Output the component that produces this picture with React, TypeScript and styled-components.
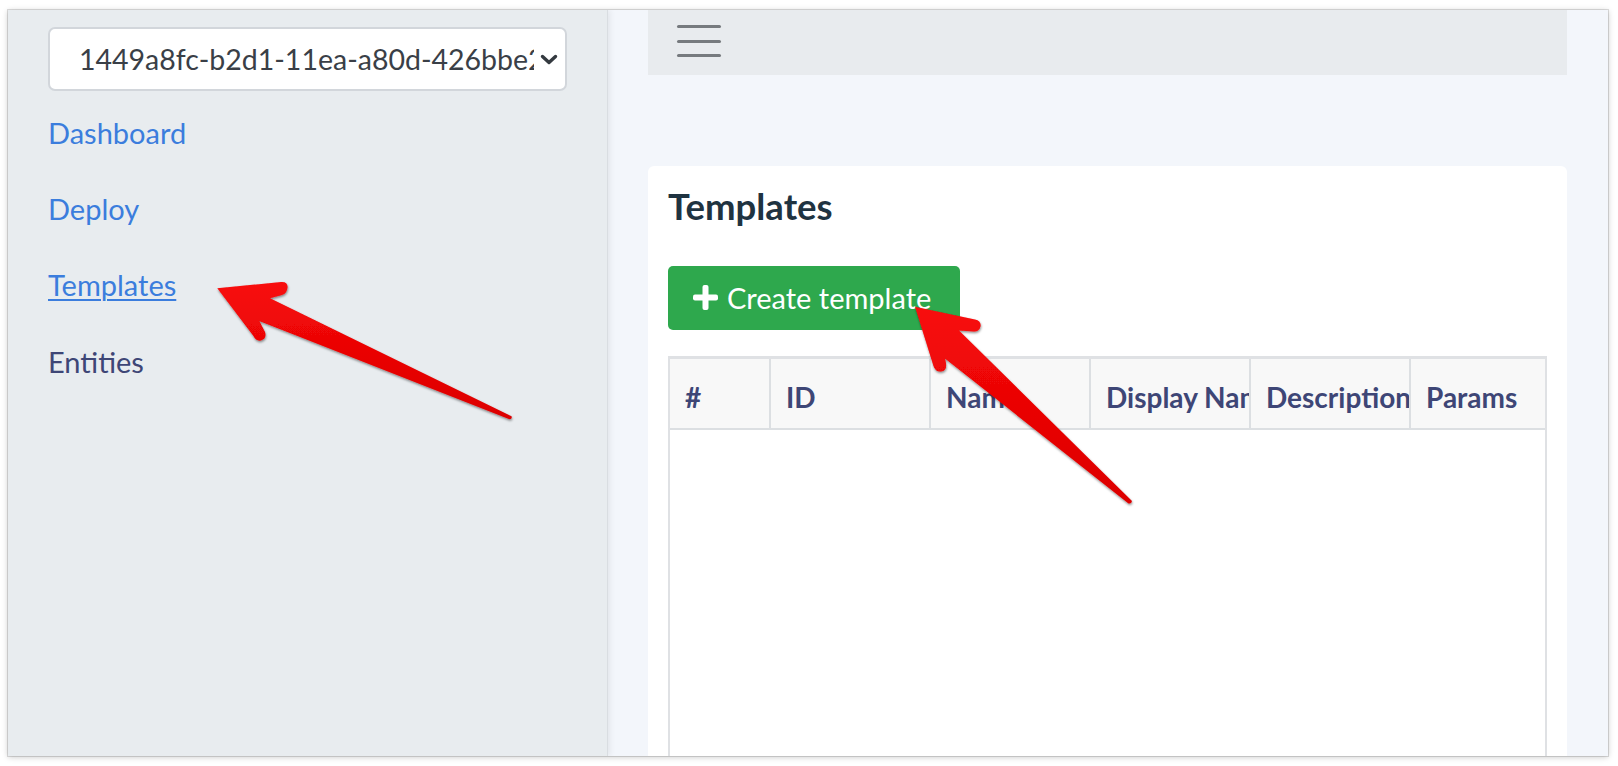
import React from "react";
import styled, { createGlobalStyle } from "styled-components";

const GlobalStyle = createGlobalStyle`
  html, body { margin: 0; padding: 0; background: #ffffff; }
  body { font-family: Lato, "Liberation Sans", sans-serif; }
  * { box-sizing: border-box; }
`;

const Page = styled.div`
  position: relative;
  width: 1618px;
  height: 766px;
  padding: 10px 10px 0 8px;
  overflow: hidden;
  background: #ffffff;
`;

const Frame = styled.div`
  display: flex;
  width: 1600px;
  height: 746px;
  overflow: hidden;
  box-shadow: 0 0 0 1px rgba(0, 0, 0, 0.13), 0 1px 6px rgba(0, 0, 0, 0.22);
`;

const Sidebar = styled.aside`
  position: relative;
  z-index: 1;
  flex: 0 0 600px;
  background: #e8ecef;
  padding: 17px 40px 0 40px;
  border-right: 1px solid #d9dde1;
  box-shadow: 2px 0 6px rgba(0, 0, 0, 0.07);
`;

const SelectBox = styled.div`
  display: flex;
  align-items: center;
  gap: 6px;
  width: 519px;
  height: 64px;
  padding: 0 7px 0 29px;
  background: #ffffff;
  border: 2px solid #d2d6db;
  border-radius: 7px;
`;

const SelectValue = styled.span`
  flex: 1;
  overflow: hidden;
  white-space: nowrap;
  font-size: 28.5px;
  color: #3a3f47;
`;

const Nav = styled.nav`
  display: flex;
  flex-direction: column;
  gap: 34.3px;
  margin-top: 20.8px;
`;

type Tone = "link" | "hover" | "plain";

const NavLink = styled.a<{ $tone: Tone }>`
  display: block;
  width: fit-content;
  font-size: 29px;
  line-height: 42px;
  color: ${(p) => (p.$tone === "plain" ? "#3e4676" : "#3b7ddd")};
  text-decoration: ${(p) => (p.$tone === "hover" ? "underline" : "none")};
  text-decoration-thickness: 2px;
  text-underline-offset: 3px;
  cursor: pointer;
`;

const Main = styled.main`
  flex: 1;
  min-width: 0;
  background: #f3f6fb;
  padding: 0 41px 0 40px;
  overflow: hidden;
`;

const TopBar = styled.header`
  display: flex;
  align-items: center;
  height: 65px;
  padding: 0 0 3px 29px;
  background: #e8ebee;
`;

const Hamburger = styled.div`
  display: flex;
  flex-direction: column;
  gap: 11.5px;
`;

const Bar = styled.span`
  display: block;
  width: 44px;
  height: 3px;
  border-radius: 2px;
  background: #767a7e;
`;

const Card = styled.section`
  margin-top: 91px;
  padding: 19px 20px 40px;
  background: #ffffff;
  border-radius: 6px;
`;

const Title = styled.h2`
  margin: 0;
  font-family: Lato, "Liberation Sans", sans-serif;
  font-weight: 700;
  font-size: 36.5px;
  line-height: 43px;
  color: #1f3341;
`;

const CreateButton = styled.button`
  display: flex;
  align-items: center;
  gap: 9px;
  margin-top: 37.5px;
  width: 292px;
  height: 64px;
  padding: 0 0 0 25px;
  border: none;
  border-radius: 5px;
  background: #2ea84d;
  color: #ffffff;
  font-family: Lato, "Liberation Sans", sans-serif;
  font-size: 29px;
  cursor: pointer;
`;

const Table = styled.div`
  margin-top: 26px;
  border: 2px solid #dfe1e4;
  border-top-width: 3px;
  border-bottom: none;
`;

const HeadRow = styled.div`
  display: grid;
  grid-template-columns: 101px 160px 160px 160px 160px 1fr;
  height: 71px;
  background: #f8f8f8;
  border-bottom: 2px solid #dcdfe2;
`;

const HeadCell = styled.div<{ $last?: boolean }>`
  display: flex;
  align-items: center;
  padding: 8px 0 0 15px;
  overflow: hidden;
  white-space: nowrap;
  border-right: ${(p) => (p.$last ? "none" : "2px solid #dcdfe2")};
  font-weight: 700;
  font-size: 28px;
  color: #3e4676;
`;

const TableBody = styled.div`
  height: 420px;
  background: #ffffff;
`;

const Overlay = styled.svg`
  position: absolute;
  top: 0;
  left: 0;
  width: 1618px;
  height: 766px;
  pointer-events: none;
  z-index: 10;
`;

const Chevron = () => (
  <svg width="18" height="11" viewBox="0 0 18 11">
    <path d="M2.5 2.5 L9 8.5 L15.5 2.5" fill="none" stroke="#343a40" strokeWidth="3.4" strokeLinecap="round" strokeLinejoin="round" />
  </svg>
);

const Plus = () => (
  <svg width="25" height="25" viewBox="0 0 25 25">
    <rect x="9.5" y="0" width="6" height="25" rx="2" fill="#ffffff" />
    <rect x="0" y="9.5" width="25" height="6" rx="2" fill="#ffffff" />
  </svg>
);

const columns = ["#", "ID", "Name", "Display Name", "Description", "Params"];

export default function App() {
  return (
    <>
      <GlobalStyle />
      <Page>
        <Frame>
          <Sidebar>
            <SelectBox>
              <SelectValue>1449a8fc-b2d1-11ea-a80d-426bbe2a1b3c</SelectValue>
              <Chevron />
            </SelectBox>
            <Nav>
              <NavLink $tone="link">Dashboard</NavLink>
              <NavLink $tone="link">Deploy</NavLink>
              <NavLink $tone="hover">Templates</NavLink>
              <NavLink $tone="plain">Entities</NavLink>
            </Nav>
          </Sidebar>
          <Main>
            <TopBar>
              <Hamburger>
                <Bar />
                <Bar />
                <Bar />
              </Hamburger>
            </TopBar>
            <Card>
              <Title>Templates</Title>
              <CreateButton>
                <Plus />
                Create template
              </CreateButton>
              <Table>
                <HeadRow>
                  {columns.map((c, i) => (
                    <HeadCell key={c} $last={i === columns.length - 1}>
                      {c}
                    </HeadCell>
                  ))}
                </HeadRow>
                <TableBody />
              </Table>
            </Card>
          </Main>
        </Frame>
        <Overlay viewBox="0 0 1618 766">
          <defs>
            <linearGradient id="arrowFill" x1="0" y1="0" x2="0" y2="1">
              <stop offset="0" stopColor="#f80a0a" />
              <stop offset="1" stopColor="#dc0000" />
            </linearGradient>
            <filter id="arrowShadow" x="-10%" y="-10%" width="120%" height="130%">
              <feDropShadow dx="0.5" dy="1.5" stdDeviation="1" floodColor="#000" floodOpacity="0.45" />
            </filter>
          </defs>
          <path
            fill="url(#arrowFill)"
            filter="url(#arrowShadow)"
            d="M217.3 288.3 L281 282 Q288 281.5 287.5 287.5 Q287 293.5 282 295 L270 298.3 L511.5 416.3 Q512.5 418.8 509.5 419.3 L259.3 321 L265 332 Q267 338.5 261 340.5 Q256 341.5 253.5 336 Z"
          />
          <path
            fill="url(#arrowFill)"
            filter="url(#arrowShadow)"
            d="M915 306.7 L975 319.5 Q981.5 321 980.5 326.5 Q979 332 973.5 331.5 L959 330.5 L1132 501 Q1131.5 504 1128.5 503.5 L945 358.5 L946 363.5 Q947 370.5 941 371.5 Q935.5 372 933.5 366 Z"
          />
        </Overlay>
      </Page>
    </>
  );
}
